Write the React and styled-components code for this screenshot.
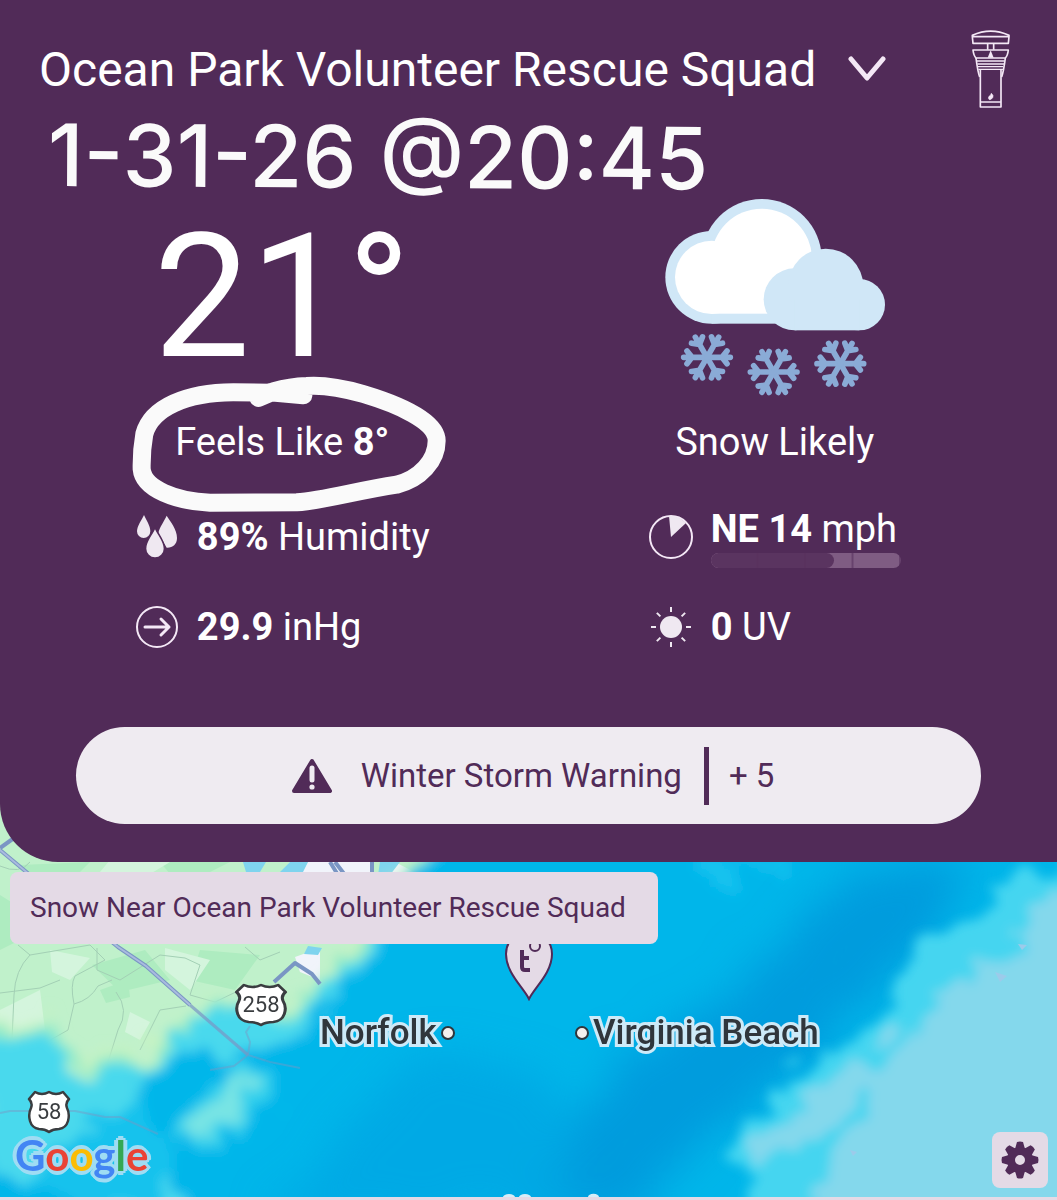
import React from 'react';
import styled, { createGlobalStyle } from 'styled-components';

const GlobalStyle = createGlobalStyle`
  * {
    box-sizing: border-box;
  }
  body {
    margin: 0;
    background: #e4dae6;
    font-family: Roboto, 'Liberation Sans', sans-serif;
  }
  p,
  h1 {
    margin: 0;
  }
  button {
    border: 0;
    font: inherit;
    cursor: pointer;
  }
  svg {
    display: block;
    flex: none;
  }
`;

const stats = [
  { id: 'humidity', icon: DropsIcon, value: '89%', label: 'Humidity' },
  { id: 'wind', icon: WindIcon, value: 'NE 14', label: 'mph', level: 65 },
  { id: 'pressure', icon: ArrowIcon, value: '29.9', label: 'inHg' },
  { id: 'uv', icon: SunIcon, value: '0', label: 'UV' },
];

const googleLetters = [
  ['G', '#4285f4'],
  ['o', '#ea4335'],
  ['o', '#fbbc04'],
  ['g', '#4285f4'],
  ['l', '#34a853'],
  ['e', '#ea4335'],
];

function ChevronIcon() {
  return (
    <svg width="38" height="26" viewBox="0 0 38 26" aria-hidden="true">
      <path d="M3 3 L19 22 L35 3" fill="none" stroke="#f4e8f6" strokeWidth="5" strokeLinecap="round" strokeLinejoin="round" />
    </svg>
  );
}

function StationIcon() {
  return (
    <svg width="41" height="79" viewBox="450 91 123 237" fill="none" stroke="#f4e8f6" strokeWidth="5" strokeLinejoin="round" aria-hidden="true">
      <path d="M457 107 Q512 82 567 107 V111 H457 Z M457 111 L459 131 H565 L567 111" />
      <path d="M503 132 V150 M521 132 V150" />
      <path d="M459 151 H565 Q563 168 556 175 H468 Q461 168 459 151 Z" />
      <path d="M503 174 L512 152 L521 174 Z" fill="#f4e8f6" stroke="none" />
      <path d="M470 184 H554 M472 193 H552 M474 201 H550 M475 209 H549" strokeWidth="4" />
      <path d="M468 175 Q473 215 479 232 M556 175 Q551 215 545 232" />
      <path d="M481 210 V322 H543 V210 M481 307 H543" />
      <path d="M514 281 Q522 288 518 294 Q514 300 508 300 Q503 296 507 290 Q513 288 514 281 Z" fill="#f4e8f6" stroke="#f4e8f6" strokeWidth="2" />
    </svg>
  );
}

function Snowflake({ x, y }) {
  return (
    <g transform={`translate(${x} ${y})`} fill="none" stroke="#8aabd6" strokeWidth="17" strokeLinecap="round" strokeLinejoin="round">
      {[0, 60, 120, 180, 240, 300].map(angle => (
        <path key={angle} transform={`rotate(${angle})`} d="M0 0 H70 M60 -19 L45 0 L60 19" />
      ))}
    </g>
  );
}

function SnowCloudIcon() {
  return (
    <svg width="220" height="197" viewBox="72 28 660 591" role="img" aria-label="Snow">
      <g fill="#d0e7f7">
        <circle cx="212" cy="263" r="139" />
        <circle cx="362" cy="208" r="180" />
        <rect x="212" y="263" width="260" height="139" />
      </g>
      <g fill="#fff">
        <circle cx="212" cy="263" r="110" />
        <circle cx="362" cy="208" r="151" />
        <rect x="212" y="263" width="260" height="109" />
      </g>
      <g fill="#d0e7f7">
        <circle cx="461" cy="329" r="93" />
        <circle cx="554" cy="290" r="113" />
        <circle cx="655" cy="345" r="77" />
        <rect x="461" y="329" width="194" height="93" />
      </g>
      <Snowflake x={198} y={503} />
      <Snowflake x={398} y={547} />
      <Snowflake x={598} y={522} />
    </svg>
  );
}

function DropsIcon() {
  return (
    <svg width="44" height="44" viewBox="74 460 132 132" fill="#efe8f1" aria-hidden="true">
      <path d="M101 460 C107 474 120 492 120 509 A20 20 0 0 1 80 509 C80 492 95 474 101 460 Z" />
      <path d="M169 462 C180 480 200 502 200 529 C200 549 186 559 169 558 L144 514 C148 496 162 478 169 462 Z" />
      <path d="M134 503 C142 520 160 540 160 561 A26 26 0 0 1 108 561 C108 540 126 520 134 503 Z" stroke="#512b58" strokeWidth="10" paintOrder="stroke" />
    </svg>
  );
}

function ArrowIcon() {
  return (
    <svg width="44" height="44" viewBox="0 0 44 44" fill="none" stroke="#f4e8f6" aria-hidden="true">
      <circle cx="22" cy="22" r="20" strokeWidth="2" />
      <path d="M10 22 H34 M26 14 L34 22 L26 30" strokeWidth="3" strokeLinecap="round" strokeLinejoin="round" />
    </svg>
  );
}

function WindIcon() {
  return (
    <svg width="44" height="44" viewBox="0 0 44 44" aria-hidden="true">
      <circle cx="22" cy="22" r="21" fill="none" stroke="#f4e8f6" strokeWidth="2" />
      <path d="M22 22 L20 1 Q29 0 37 8 Z" fill="#efe8f1" />
    </svg>
  );
}

function SunIcon() {
  return (
    <svg width="44" height="44" viewBox="0 0 44 44" aria-hidden="true">
      <circle cx="22" cy="22" r="11" fill="#efe8f1" />
      {[0, 45, 90, 135, 180, 225, 270, 315].map(angle => (
        <path key={angle} transform={`rotate(${angle} 22 22)`} d="M37 22 H42" stroke="#efe8f1" strokeWidth="2" />
      ))}
    </svg>
  );
}

function WarningIcon() {
  return (
    <svg width="42" height="36" viewBox="0 0 42 36" aria-hidden="true">
      <path d="M21 3 L39 33 H3 Z" fill="#512b58" stroke="#512b58" strokeWidth="4" strokeLinejoin="round" />
      <path d="M21 10 V22" stroke="#efebf1" strokeWidth="5" strokeLinecap="round" />
      <circle cx="21" cy="29" r="2.6" fill="#efebf1" />
    </svg>
  );
}

function GearIcon() {
  return (
    <svg width="40" height="40" viewBox="0 0 40 40" aria-hidden="true">
      {[0, 45, 90, 135, 180, 225, 270, 315].map(angle => (
        <path key={angle} transform={`rotate(${angle} 20 20)`} d="M15 9 L17 2 Q20 1 23 2 L25 9 Z" fill="#512b58" />
      ))}
      <circle cx="20" cy="20" r="9" fill="none" stroke="#512b58" strokeWidth="8" />
    </svg>
  );
}

function Pin() {
  return (
    <svg width="50" height="82" viewBox="0 0 50 82" role="img" aria-label="Station">
      <path d="M25 80 C20 69 2 54 2 35 A23 23 0 0 1 48 35 C48 54 30 69 25 80 Z" fill="#e4dae6" stroke="#512b58" strokeWidth="2" />
      <path d="M18 31 V48 Q18 51 21 51 H26 M18 39 H25" fill="none" stroke="#512b58" strokeWidth="4" />
      <circle cx="31" cy="27" r="5" fill="none" stroke="#512b58" strokeWidth="2" />
    </svg>
  );
}

function Shield({ number, wide }) {
  return (
    <ShieldBox $wide={wide}>
      <svg width={wide ? 54 : 44} height="44" viewBox="0 0 44 44" preserveAspectRatio="none" aria-hidden="true">
        <path
          d="M8 2 Q15 6 22 2 Q29 6 36 2 L42 9 Q38 13 40 18 Q43 24 41 31 Q39 38 32 39 Q26 39 22 42 Q18 39 12 39 Q5 38 3 31 Q1 24 4 18 Q6 13 2 9 Z"
          fill="#fff"
          stroke="#3a3d40"
          strokeWidth="2.5"
          strokeLinejoin="round"
        />
      </svg>
      <span>{number}</span>
    </ShieldBox>
  );
}

// Terrain, roads and the radar layer; y 0 is the top of the map area.
function RadarMap() {
  return (
    <MapDrawing viewBox="0 0 1057 397" preserveAspectRatio="xMinYMin slice" aria-hidden="true">
      <defs>
        <filter id="rough" x="-10%" y="-10%" width="120%" height="120%">
          <feTurbulence type="fractalNoise" baseFrequency="0.03" numOctaves="5" seed="8" result="noise" />
          <feDisplacementMap in="SourceGraphic" in2="noise" scale="60" xChannelSelector="R" yChannelSelector="G" />
          <feGaussianBlur stdDeviation="6" />
        </filter>
        <filter id="haze" x="-30%" y="-30%" width="160%" height="160%">
          <feTurbulence type="fractalNoise" baseFrequency="0.03" numOctaves="4" seed="3" result="noise" />
          <feDisplacementMap in="SourceGraphic" in2="noise" scale="50" xChannelSelector="R" yChannelSelector="G" />
          <feGaussianBlur stdDeviation="20" />
        </filter>
      </defs>
      <rect width="1057" height="397" fill="#c0f1cb" />
      <g fill="#aeecc0">
        <path d="M0 95 L24 110 L30 135 L0 150 Z M92 165 L145 150 L170 180 L120 192 Z M100 190 L128 180 L130 197 L106 203 Z M200 150 L260 155 L235 190 L190 180 Z M20 65 L90 62 L80 72 L30 75 Z M160 62 L230 62 L210 72 L170 74 Z" />
      </g>
      <g fill="#d4f5dd">
        <path d="M110 60 L170 62 L150 74 L100 72 Z M165 148 L210 160 L190 190 L165 170 Z M50 150 L90 158 L70 180 L52 172 Z M290 62 L330 66 L325 75 L280 73 Z M0 210 L40 190 L45 230 L0 240 Z M130 212 L150 222 L140 240 L125 232 Z" />
      </g>
      <path d="M295 157 L320 148 V180 L300 172 Z M308 62 H370 V75 H300 Z M395 62 L420 75 H380 Z" fill="#f1f4fb" />
      <path d="M243 62 H266 L260 72 H246 Z M290 62 H308 L302 74 H278 Z M308 146 L322 148 L318 155 L304 154 Z M380 62 H400 L390 75 H378 Z" fill="#7fd4ee" />
      <g fill="none" stroke="#a3d0b5" strokeWidth="1">
        <path d="M0 66 Q20 75 30 62 M18 145 L30 155 L60 150 L90 145 L105 160 L75 176 Q70 185 74 204 L68 230 L45 243 M30 155 Q15 170 14 195 L12 240 M0 193 L40 188 L60 180 M97 148 V170 L120 180 L160 155 L185 158 L200 165 L190 195 L215 202 L240 190 M74 204 Q90 200 98 186 L112 180 M116 192 Q130 210 118 230 L108 262 L110 290 M186 206 L160 210 L140 250 M245 147 L260 160 L280 152" />
      </g>
      <g filter="url(#rough)">
        <path d="M-20 214 L50 216 L62 238 L110 248 L140 248 L165 222 L225 204 L290 208 L325 170 L348 140 L380 90 L430 40 H1100 V430 H-20 Z" fill="#c8f3c0" />
        <path d="M-20 226 L55 228 L70 254 L120 260 L150 252 L170 226 L230 208 L290 210 L328 176 L352 148 L390 95 L440 40 H1100 V430 H-20 Z" fill="#8deacb" />
        <path d="M-20 240 H50 L68 270 L120 274 L160 256 L180 230 L235 214 L295 214 L335 182 L362 150 L400 90 L450 40 H1100 V430 H-20 Z" fill="#48d9ed" />
        <path d="M350 182 L375 150 L410 80 L460 30 H1100 V430 H190 L175 352 L140 345 L110 430 L-40 430 V380 L60 372 L120 330 L140 300 L160 272 L200 248 L240 262 L300 235 Z" fill="#00b6ea" />
        <path d="M20 380 L130 300 L160 330 L180 360 L150 420 Z" fill="#16c2ed" />
        <path d="M220 270 L257 265 L270 300 L240 325 L213 350 L183 340 L198 305 Z" fill="#30d0ec" />
        <path d="M230 275 L252 285 L240 306 L205 342 L193 334 Z" fill="#78e4e4" />
        <path d="M60 254 L95 268 L92 284 L70 282 Z" fill="#b2f0c8" />
        <path d="M690 60 L750 62 L735 90 L715 98 Z M755 62 H795 L775 85 Z" fill="#12c3ef" />
      </g>
      <g filter="url(#haze)">
        <path d="M850 75 L980 55 L930 140 L850 220 L770 290 L690 350 L620 420 H520 L590 300 L660 230 L740 190 L790 130 Z" fill="#009bdd" />
        <path d="M420 250 L560 280 L580 420 L260 420 L330 350 Z" fill="#00a6e4" opacity="0.8" />
      </g>
      <g filter="url(#rough)">
        <path d="M1090 55 L1015 80 L980 105 L935 130 L905 175 L880 215 L840 245 L790 280 L750 318 L730 350 L750 385 L745 430 H1090 Z" fill="#45d5f0" />
        <path d="M1090 80 L1035 105 L1005 150 L960 180 L915 220 L870 260 L810 295 L770 330 L750 350 L780 360 L820 335 L845 305 L870 295 L860 330 L830 360 L820 430 H1090 Z" fill="#84d8ec" />
      </g>
      <path d="M995 172 L1007 176 L1000 182 Z M1018 144 L1027 145 L1022 150 Z M850 350 L857 352 L853 356 Z" fill="#9ccbea" />
      <g fill="none" stroke="#7a96c4" strokeWidth="4" strokeLinejoin="round">
        <path d="M0 50 L30 75 L118 147 L146 166 L190 205" />
        <path d="M190 205 L248 255" strokeWidth="3" opacity="0.7" />
        <path d="M0 48 L14 38 M274 182 L295 163 L312 174 L320 184 M330 62 L338 75 M335 62 L345 75 M372 60 V76" />
        <path d="M250 226 L246 232 L250 242 L248 255 L234 266 L210 270 M248 255 L270 262 L300 268 M0 313 L10 311 H75 L105 317 H120 L158 334" strokeWidth="2" opacity="0.45" />
      </g>
      <path d="M0 50 L30 75 L118 147 L146 166 L190 205" fill="none" stroke="#a9bbdf" strokeWidth="2" />
      <path d="M503 397 A6 3 0 0 1 515 397 Z M519 397 A6 3 0 0 1 531 397 Z M588 397 A5 3 0 0 1 599 397 Z" fill="#d6edf8" />
    </MapDrawing>
  );
}

const App = () => {
  return (
    <Page>
      <GlobalStyle />
      <Panel>
        <Header>
          <LocationButton type="button">
            Ocean Park Volunteer Rescue Squad
            <ChevronIcon />
          </LocationButton>
          <StationButton type="button" aria-label="Station details">
            <StationIcon />
          </StationButton>
        </Header>
        <Note>1-31-26 @20:45</Note>
        <Conditions>
          <Temperature>21°</Temperature>
          <Picture>
            <SnowCloudIcon />
          </Picture>
          <Summary>
            Feels Like <strong>8°</strong>
            <Scribble viewBox="60 40 960 420" aria-hidden="true">
              <path d="M445 112 L482 96 L370 95 C230 96 125 140 103 220 Q94 270 95 325 C100 385 200 422 300 426 L560 425 C640 420 740 390 860 372 C930 355 980 300 980 240 C980 180 860 130 760 100 C690 80 640 72 590 76 C530 78 500 90 480 95 L580 104" />
            </Scribble>
          </Summary>
          <Summary>Snow Likely</Summary>
          <StatColumn>
            <Stat {...stats[0]} />
            <Stat {...stats[2]} />
          </StatColumn>
          <StatColumn>
            <Stat {...stats[1]} />
            <Stat {...stats[3]} />
          </StatColumn>
        </Conditions>
        <Alert type="button">
          <WarningIcon />
          <AlertName>Winter Storm Warning</AlertName>
          <AlertCount>+ 5</AlertCount>
        </Alert>
      </Panel>
      <MapArea>
        <RadarMap />
        <Place $x={504} $y={119}>
          <Pin />
        </Place>
        <Place $x={234} $y={183}>
          <Shield number="258" wide />
        </Place>
        <Place $x={27} $y={290}>
          <Shield number="58" />
        </Place>
        <Place $x={320} $y={213}>
          <City>
            Norfolk
            <Dot />
          </City>
        </Place>
        <Place $x={575} $y={213}>
          <City>
            <Dot />
            Virginia Beach
          </City>
        </Place>
        <Banner>Snow Near Ocean Park Volunteer Rescue Squad</Banner>
        <Google>
          {googleLetters.map(([letter, color], i) => (
            <Letter key={i} $color={color}>
              {letter}
            </Letter>
          ))}
        </Google>
        <SettingsButton type="button" aria-label="Map settings">
          <GearIcon />
        </SettingsButton>
      </MapArea>
    </Page>
  );
};

function Stat({ icon: Icon, value, label, level }) {
  return (
    <StatRow>
      <Icon />
      <StatText>
        <strong>{value}</strong> {label}
        {level && (
          <Gauge>
            <GaugeFill style={{ width: `${level}%` }} />
          </Gauge>
        )}
      </StatText>
    </StatRow>
  );
}

const Page = styled.main`
  min-height: 100vh;
  padding-bottom: 3px;
  display: flex;
  flex-direction: column;
`;

const Panel = styled.section`
  position: relative;
  z-index: 1;
  padding: 27px 36px 38px;
  background: #512b58;
  color: #fff;
  border-bottom-left-radius: 58px;
`;

const Header = styled.header`
  display: flex;
  align-items: center;
  justify-content: space-between;
  height: 84px;
  padding: 0 10px 0 3px;
`;

const LocationButton = styled.button`
  display: flex;
  align-items: center;
  gap: 32px;
  padding: 0;
  background: none;
  color: #fff;
  font-size: 48px;
`;

const StationButton = styled.button`
  padding: 0;
  background: none;
`;

const Note = styled.p`
  padding-left: 12px;
  font-family: Inter, Roboto, sans-serif;
  font-size: 86px;
  font-weight: 500;
  line-height: 88px;
  color: #fafafa;
  transform: rotate(0.3deg);
  transform-origin: left;
`;

const Conditions = styled.div`
  display: grid;
  grid-template-columns: 1fr 1fr;
`;

const Temperature = styled.h1`
  height: 211px;
  line-height: 196px;
  text-align: center;
  font-size: 172px;
  font-weight: 400;
`;

const Picture = styled.div`
  display: flex;
  justify-content: center;
`;

const Summary = styled.p`
  position: relative;
  text-align: center;
  font-size: 38px;
  line-height: 64px;
`;

const Scribble = styled.svg`
  position: absolute;
  left: 94px;
  top: -36px;
  width: 320px;
  height: 140px;

  path {
    fill: none;
    stroke: #fafafa;
    stroke-width: 54;
    stroke-linecap: round;
    stroke-linejoin: round;
  }
`;

const StatColumn = styled.div`
  justify-self: center;
  padding-top: 18px;
`;

const StatRow = styled.div`
  display: flex;
  align-items: center;
  gap: 18px;
  height: 90px;
`;

const StatText = styled.div`
  font-size: 38px;
  line-height: 44px;
`;

const Gauge = styled.div`
  width: 190px;
  height: 15px;
  margin-top: 2px;
  border-radius: 8px;
  overflow: hidden;
  background:
    linear-gradient(90deg, transparent calc(100% - 2px), #67426d 0) 0 0 / 25% 100%,
    #7f5c83;
`;

const GaugeFill = styled.div`
  height: 100%;
  border-radius: 8px;
  background: rgba(88, 50, 94, 0.95);
`;

const Alert = styled.button`
  display: flex;
  align-items: center;
  justify-content: center;
  width: calc(100% - 80px);
  height: 97px;
  margin: 55px 40px 0;
  padding: 0 0 0 8px;
  border-radius: 49px;
  background: #efebf1;
  color: #512b58;
  font-size: 33px;
`;

const AlertName = styled.span`
  padding: 0 22px 0 28px;
`;

const AlertCount = styled.span`
  padding-left: 20px;
  line-height: 58px;
  border-left: 5px solid #512b58;
`;

const MapArea = styled.section`
  position: relative;
  flex: 1;
  min-height: 397px;
  margin-top: -62px;
  overflow: hidden;
`;

const MapDrawing = styled.svg`
  position: absolute;
  inset: 0;
  width: 100%;
  height: 100%;
`;

const Place = styled.div`
  position: absolute;
  left: ${props => props.$x}px;
  top: ${props => props.$y}px;
`;

const ShieldBox = styled.div`
  display: grid;
  place-items: center;
  width: ${props => (props.$wide ? 54 : 44)}px;
  height: 44px;
  color: #3a3d40;
  font-size: 22px;
  line-height: 40px;

  > * {
    grid-area: 1 / 1;
  }
`;

const City = styled.div`
  display: flex;
  align-items: center;
  gap: 4px;
  color: #30363c;
  font-size: 35px;
  font-weight: 500;
  line-height: 40px;
  -webkit-text-stroke: 6px #cdeaf8;
  paint-order: stroke fill;
`;

const Dot = styled.span`
  width: 14px;
  height: 14px;
  border: 2px solid #30363c;
  border-radius: 50%;
  background: #f3f0ee;
`;

const Banner = styled.p`
  position: absolute;
  left: 10px;
  top: 72px;
  padding: 0 32px 0 20px;
  border-radius: 8px;
  background: #e4dae6;
  color: #512b58;
  font-size: 28px;
  line-height: 72px;
`;

const Google = styled.div`
  position: absolute;
  left: 15px;
  bottom: 16px;
  font-family: Lato, sans-serif;
  font-size: 42px;
  font-weight: 700;
  line-height: 52px;
  filter: drop-shadow(2px 2px 0 #9fdcf3) drop-shadow(-2px -2px 0 #9fdcf3) drop-shadow(2px -2px 0 #9fdcf3)
    drop-shadow(-2px 2px 0 #9fdcf3);
`;

const Letter = styled.span`
  color: ${props => props.$color};
`;

const SettingsButton = styled.button`
  position: absolute;
  right: 9px;
  bottom: 9px;
  display: grid;
  place-items: center;
  width: 56px;
  height: 56px;
  padding: 0;
  border-radius: 8px;
  background: #e4dae6;
`;

export default App;
